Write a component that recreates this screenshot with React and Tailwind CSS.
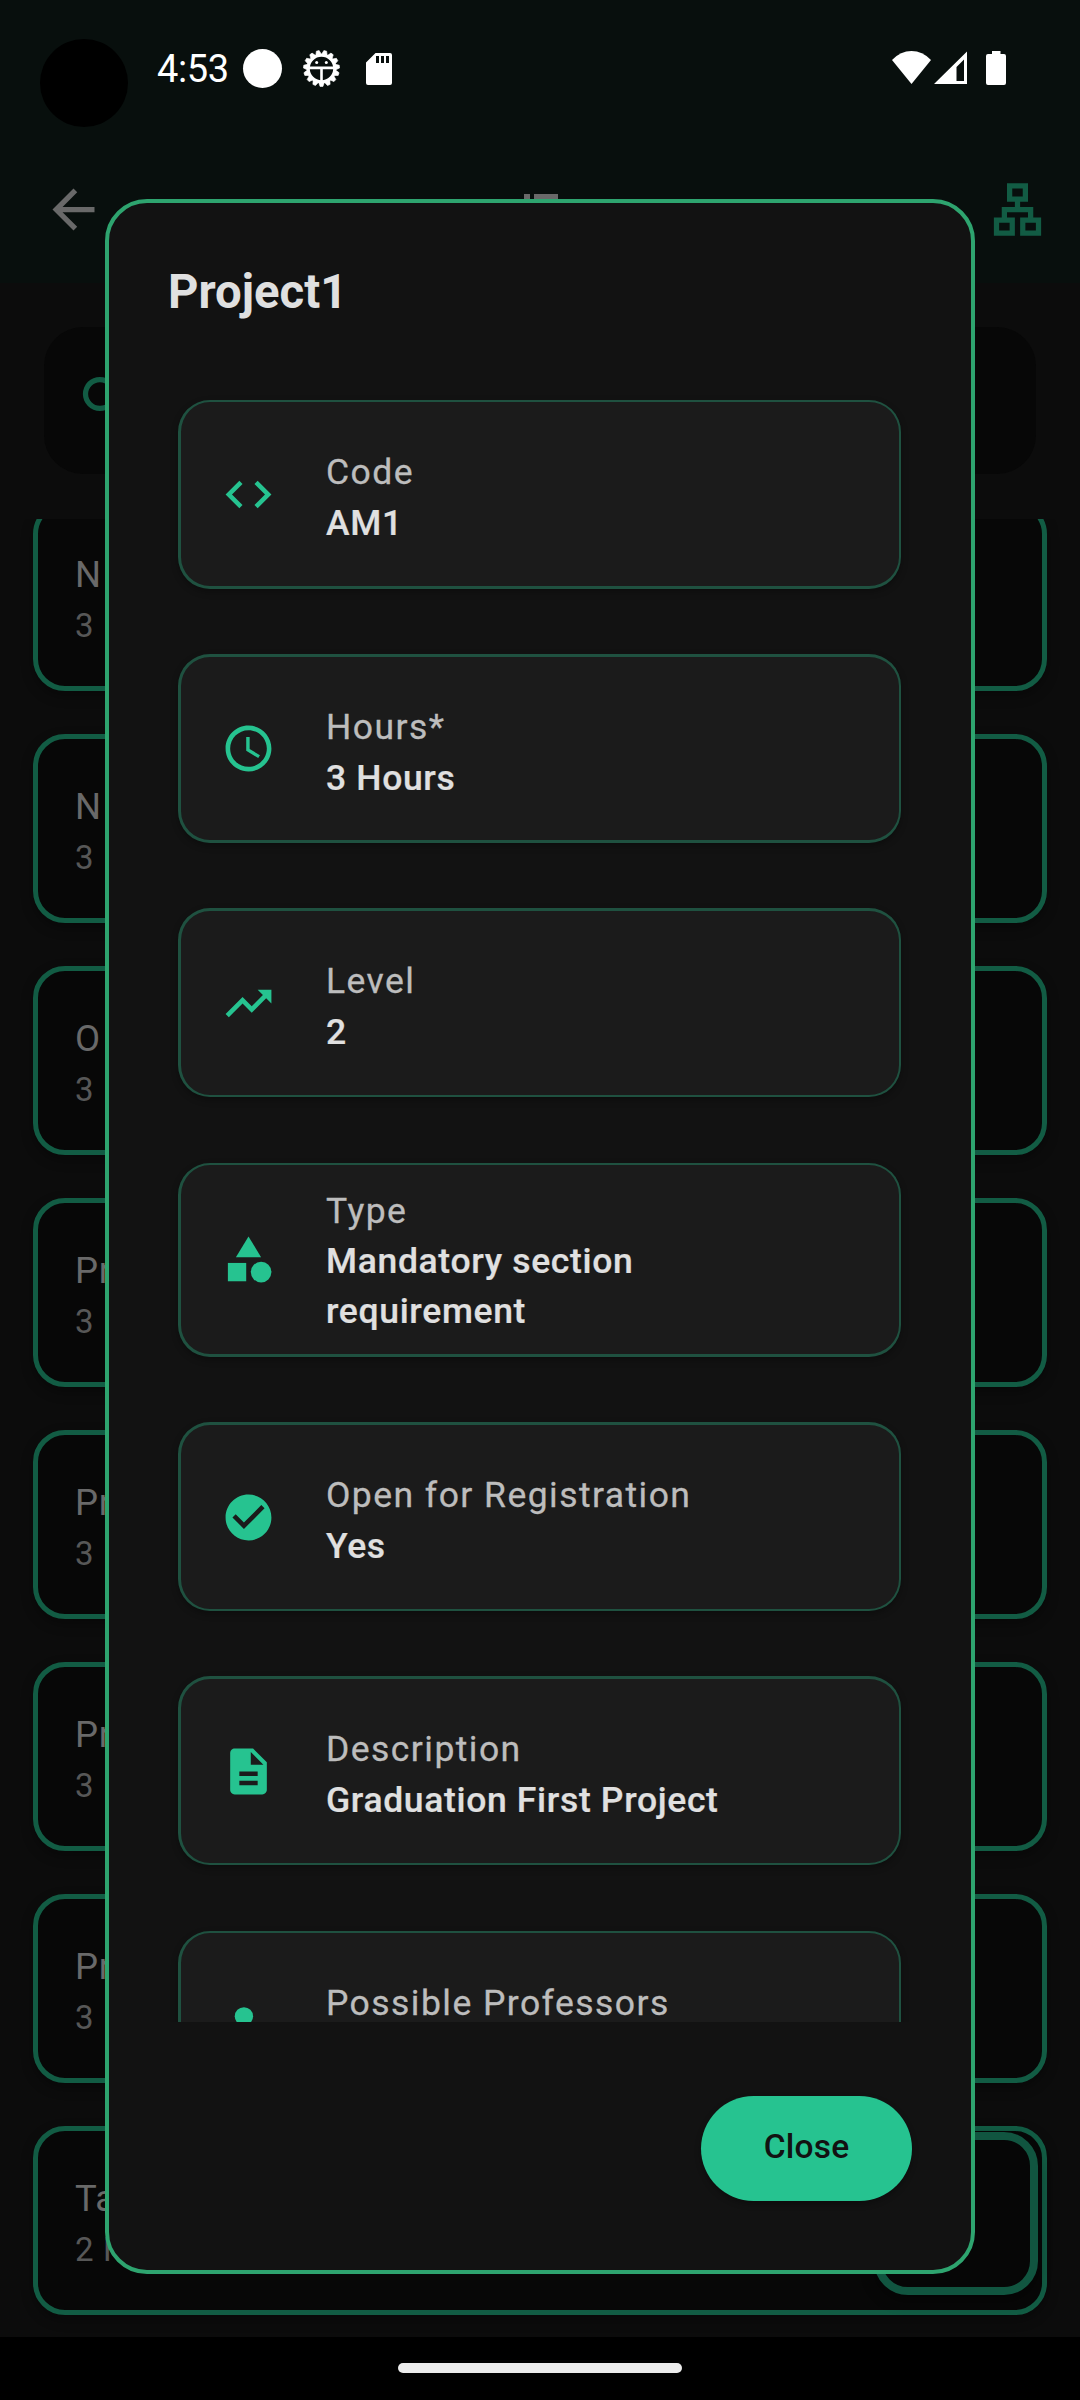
import React from "react";
import {
  MdAccessTime,
  MdCategory,
  MdCheckCircle,
  MdCode,
  MdDescription,
  MdManageAccounts,
  MdTrendingUp,
} from "react-icons/md";

const courses = [
  { name: "N", hours: "3" },
  { name: "N", hours: "3" },
  { name: "O", hours: "3" },
  { name: "Pr", hours: "3" },
  { name: "Pr", hours: "3" },
  { name: "Pr", hours: "3" },
  { name: "Pr", hours: "3" },
  { name: "Ta", hours: "2 H" },
];

const details = [
  { icon: MdCode, label: "Code", value: "AM1", box: "h-[189px] mb-[65px] border-t-2 border-b-[3px]", text: "pt-[45px] leading-[51px]" },
  { icon: MdAccessTime, label: "Hours*", value: "3 Hours", box: "h-[189px] mb-[65px] border-t-[3px] border-b-[3px]", text: "pt-[45px] leading-[51px]" },
  { icon: MdTrendingUp, label: "Level", value: "2", box: "h-[189px] mb-[66px] border-t-[3px] border-b-2", text: "pt-[45px] leading-[51px]" },
  { icon: MdCategory, label: "Type", value: "Mandatory section requirement", box: "h-[194px] mb-[65px] border-t-2 border-b-[3px]", text: "pt-[21px] leading-[50px]" },
  { icon: MdCheckCircle, label: "Open for Registration", value: "Yes", box: "h-[189px] mb-[65px] border-t-[3px] border-b-2", text: "pt-[45px] leading-[51px]" },
  { icon: MdDescription, label: "Description", value: "Graduation First Project", box: "h-[189px] mb-[66px] border-t-[3px] border-b-2", text: "pt-[45px] leading-[51px]" },
  { icon: MdManageAccounts, label: "Possible Professors", value: "", box: "h-[189px] border-t-2 border-b-2", text: "pt-[45px] leading-[51px]" },
];

const teeth = Array.from({ length: 15 }, (_, i) => i * 24 + 12);

function GearIcon() {
  return (
    <svg className="ml-[21px] h-[37px] w-[37px]" viewBox="-18.5 -18.5 37 37" fill="none" stroke="#fff">
      <circle r="13.2" strokeWidth="3" />
      {teeth.map((a) => (
        <path key={a} d="M-3 -13.5 L-1.4 -18 H1.4 L3 -13.5 Z" fill="#fff" strokeWidth="0.6" transform={`rotate(${a})`} />
      ))}
      <path d="M-13 -0.6H13M0 -0.6V13.5" strokeWidth="2.6" />
      <circle cx="-4.8" cy="-6" r="1.5" fill="#fff" stroke="none" />
      <circle cx="4.8" cy="-6" r="1.5" fill="#fff" stroke="none" />
    </svg>
  );
}

function StatusBar() {
  return (
    <div className="flex h-[138px] items-start text-white">
      <div className="ml-[40px] mt-[39px] h-[88px] w-[88px] rounded-full bg-black" />
      <div className="ml-[29px] mt-[47px] flex h-[43px] items-center">
        <span className="mt-[2px] w-[72px] text-[38px] leading-[43px] tracking-[-0.4px]">4:53</span>
        <div className="ml-[14px] h-[39px] w-[39px] rounded-full bg-white" />
        <GearIcon />
        <svg className="ml-[26px] h-[32px] w-[26px]" viewBox="0 0 26 32">
          <path fill="#fff" fillRule="evenodd" d="M9.5 0H24a2 2 0 0 1 2 2V30a2 2 0 0 1-2 2H2a2 2 0 0 1-2-2V9.500zM10 3v7h3V3zM15 3v7h3V3zM20 3v7h3V3z" />
        </svg>
      </div>
      <div className="ml-[500px] mt-[51px] flex h-[34px] items-start">
        <svg className="h-[33px] w-[39px]" viewBox="0 0 39 33">
          <path fill="#fff" d="M0 9Q8.500 0 19.500 0T39 9L19.500 33z" />
        </svg>
        <svg className="ml-[3px] h-[33px] w-[33px]" viewBox="0 0 33 33">
          <path fill="#fff" fillRule="evenodd" d="M33 .5V33H0zM30 8.500L22.500 16V30H30z" />
        </svg>
        <svg className="ml-[19px] h-[34px] w-[20px]" viewBox="0 0 20 34">
          <path fill="#fff" d="M6 0H14.500V3H18a2 2 0 0 1 2 2V32a2 2 0 0 1-2 2H2a2 2 0 0 1-2-2V5A2 2 0 0 1 2 3H6z" />
        </svg>
      </div>
    </div>
  );
}

function AppBar() {
  return (
    <div className="flex h-[145px] items-start">
      <svg className="ml-[42px] mt-[40px] h-[63px] w-[63px]" viewBox="0 0 24 24" fill="#696969">
        <path d="M20 11H7.830l5.590-5.590L12 4l-8 8 8 8 1.410-1.410L7.830 13H20z" />
      </svg>
      <svg className="ml-[419px] mt-[56px] h-[24px] w-[34px]" viewBox="0 0 34 24" fill="#696969">
        <path d="M0 0h6v5H0zM10 0h24v5H10zM0 10h6v5H0zM10 10h24v5H10z" />
      </svg>
      <svg className="ml-[428px] mt-[40px] h-[63px] w-[63px]" viewBox="0 0 24 24" fill="#125c44">
        <path fillRule="evenodd" d="M13 22h8v-7h-3v-4h-5V9h3V2H8v7h3v2H6v4H3v7h8v-7H8v-2h8v2h-3zM10 7V4h4v3zM9 17v3H5v-3zM19 17v3h-4v-3z" />
      </svg>
    </div>
  );
}

function CourseCard({ course }) {
  return (
    <div className="mb-[43px] flex h-[189px] shrink-0 flex-col rounded-[32px] border-[5px] border-[#125c44] bg-[#070707] pl-[37px] pt-[40px] shadow-[0_5px_12px_rgba(0,0,0,0.35)]">
      <span className="text-[36.500px] leading-[56px] tracking-[0.6px] text-[#696969]">{course.name}</span>
      <span className="text-[33px] leading-[46px] tracking-[0.6px] text-[#575757]">{course.hours}</span>
    </div>
  );
}

function DetailCard({ item }) {
  const Icon = item.icon;
  return (
    <div className={"flex w-[723px] shrink-0 items-stretch rounded-[32px] border-l-[3px] border-r-2 border-[#1f5140] bg-[#1b1b1b] shadow-[0_3px_7px_rgba(0,0,0,0.3)] " + item.box}>
      <div className="ml-[39.500px] flex w-[55px] items-center">
        <Icon className="h-[55px] w-[55px] text-[#26c390]" />
      </div>
      <div className={"ml-[50.500px] flex w-[400px] flex-col text-[35.5px] " + item.text}>
        <span className="tracking-[1.45px] text-[#bdbdbd] [-webkit-text-stroke:0.3px_#bdbdbd]">{item.label}</span>
        <span className="font-medium tracking-[0.65px] text-[#e0e0e0] [-webkit-text-stroke:0.2px_#e0e0e0]">{item.value}</span>
      </div>
    </div>
  );
}

export default function App() {
  return (
    <div className="relative flex h-[2400px] w-[1080px] flex-col overflow-hidden bg-[#0c0c0c] font-['Roboto',sans-serif]">
      <header className="h-[283px] shrink-0 bg-[#080f0d]">
        <StatusBar />
        <AppBar />
      </header>

      <div className="mx-[44px] mt-[44px] flex h-[147px] shrink-0 rounded-[39px] bg-[#070707] pl-[31px] pt-[42px]">
        <svg className="h-[63px] w-[63px]" viewBox="0 0 24 24" fill="#125c44">
          <path d="M15.500 14h-.79l-.28-.27A6.470 6.470 0 0 0 16 9.500 6.500 6.500 0 1 0 9.500 16c1.610 0 3.090-.59 4.230-1.570l.27.28v.79l5 4.990L20.490 19zM9.500 14C7.010 14 5 11.990 5 9.500S7.010 5 9.500 5 14 7.010 14 9.500 11.990 14 9.500 14" />
        </svg>
      </div>

      <main className="mt-[45px] flex h-[1818px] shrink-0 flex-col overflow-hidden px-[33px]">
        <div className="-mt-[17px] flex flex-col">
          {courses.map((c, i) => (
            <CourseCard key={i} course={c} />
          ))}
        </div>
      </main>

      <div className="absolute left-[874px] top-[2132px] h-[163px] w-[164px] rounded-[34px] border-8 border-[#115540] bg-[#060606] shadow-[0_6px_14px_rgba(0,0,0,0.4)]" />

      <nav className="flex h-[63px] shrink-0 items-start justify-center bg-black">
        <div className="mt-[26px] h-[10px] w-[284px] rounded-full bg-[#ececec]" />
      </nav>

      <section className="absolute left-[105px] top-[199px] flex h-[2075px] w-[870px] flex-col rounded-[42px] border-4 border-[#2ea46f] bg-[#121212]">
        <h1 className="mt-[59px] pl-[59px] text-[47.250px] font-bold leading-[60px] text-[#e0e0e0]">Project1</h1>
        <div className="mt-[62px] flex h-[1638px] shrink-0 flex-col overflow-hidden pl-[69px] pt-[16px]">
          {details.map((d) => (
            <DetailCard key={d.label} item={d} />
          ))}
        </div>
        <button className="ml-[592px] mt-[74px] h-[105px] w-[211px] rounded-full bg-[#26c390] pb-[2px] text-[33.500px] font-medium tracking-[0.2px] text-[#121212] shadow-[0_3px_6px_rgba(0,0,0,0.3)]">
          Close
        </button>
      </section>
    </div>
  );
}
